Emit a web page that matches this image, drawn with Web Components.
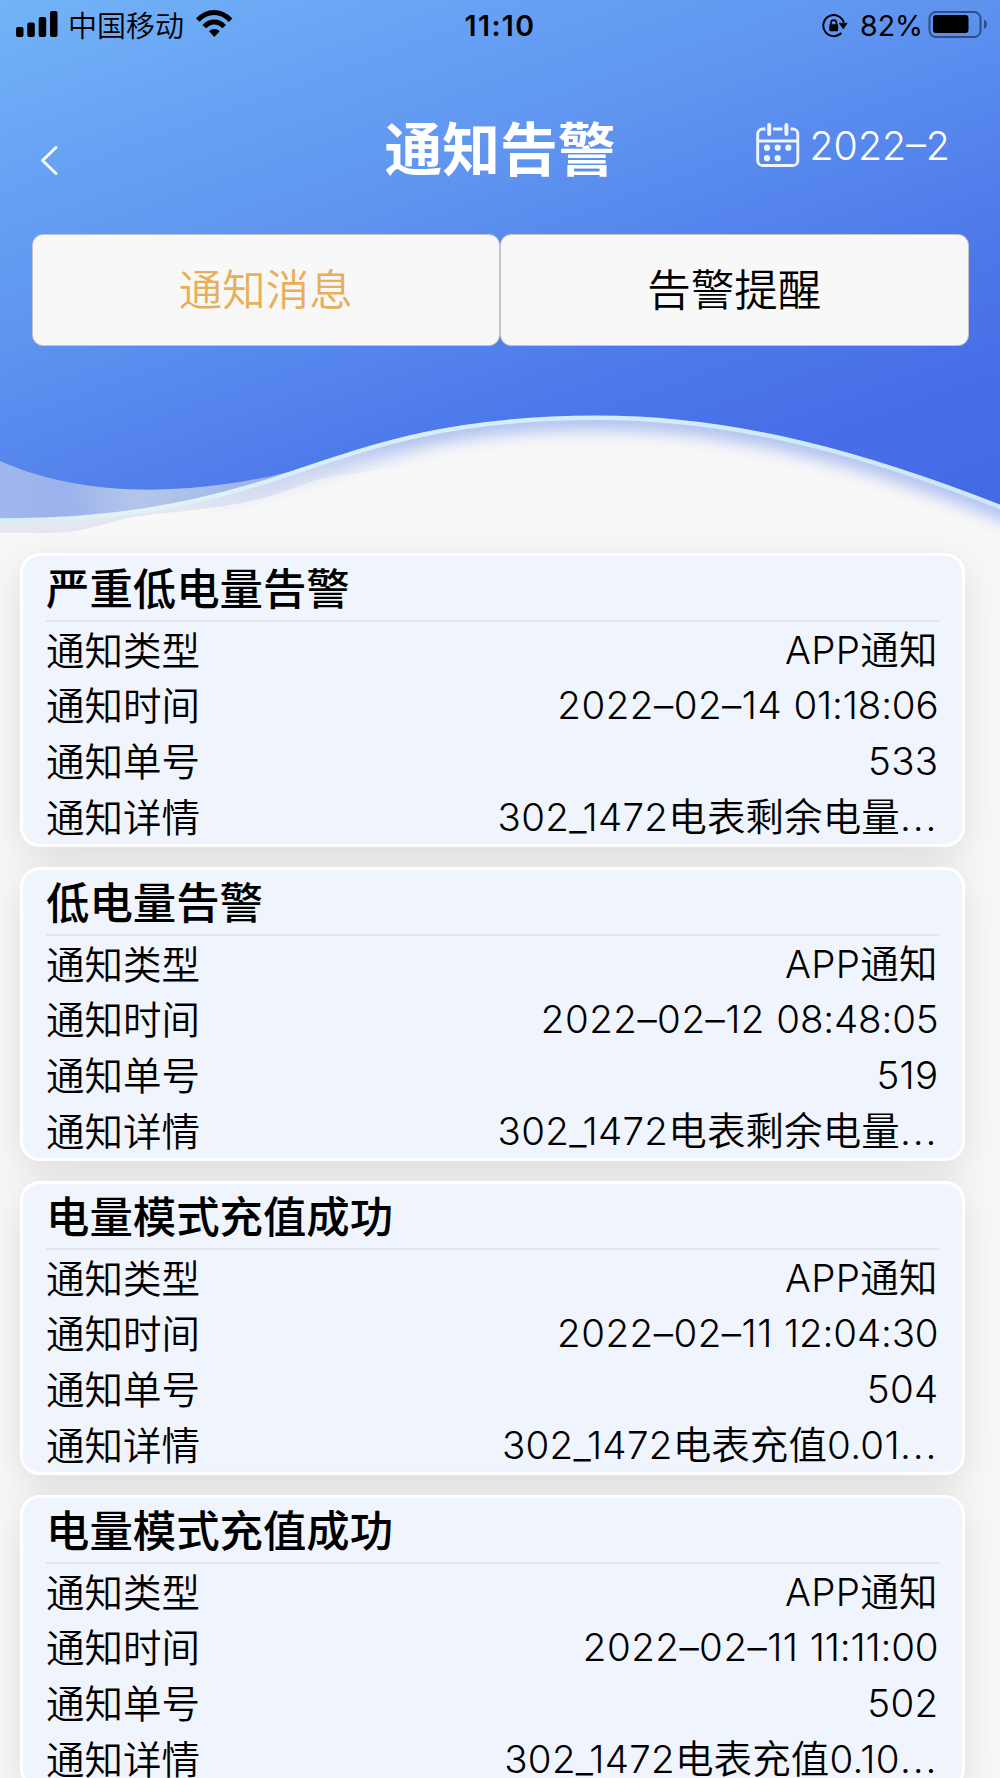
<!DOCTYPE html>
<html lang="zh-CN">
<head>
<meta charset="utf-8">
<title>通知告警</title>
<style>
html,body{margin:0;background:#f8f8f8}
body{width:1000px;height:1778px;overflow:hidden;font-family:Inter,"Noto Sans CJK SC",sans-serif;font-weight:300;color:#000}
</style>
</head>
<body>
<notice-app></notice-app>
<script>
const define = (name, html, setup) => {
  const t = document.createElement('template');
  t.innerHTML = html;
  customElements.define(name, class extends HTMLElement {
    connectedCallback() {
      if (this.shadowRoot) return;
      this.attachShadow({mode: 'open'}).append(t.content.cloneNode(true));
      if (setup) setup(this, this.shadowRoot);
    }
  });
};

define('status-bar', `
<style>
:host{display:flex;height:50px;align-items:flex-start;justify-content:space-between;box-sizing:border-box}
svg{display:block;flex:none}
div{display:flex;height:50px;line-height:50px}
.left,.right{flex:1 1 0}
.right{justify-content:flex-end}
.carrier{font-size:29px;margin-left:3px;font-weight:350;width:117px;white-space:nowrap;line-height:53px}
.time{font-size:28.5px;font-weight:600;letter-spacing:1.400px;line-height:51px}
.pct{font-size:28.5px;font-weight:400;letter-spacing:0;white-space:nowrap;line-height:51px}
</style>
<div class="left">
<svg width="65" height="50"><g fill="#000"><rect x="16" y="27" width="7.5" height="10" rx="2"/><rect x="27.3" y="22.5" width="7.5" height="14.5" rx="2"/><rect x="38.7" y="17" width="7.5" height="20" rx="2"/><rect x="50" y="11" width="7.5" height="26" rx="2"/></g></svg>
<span class="carrier">中国移动</span>
<svg width="60" height="50"><g fill="none" stroke="#000" stroke-width="5"><path d="M12.8 20.2C22 9.800 36 9.800 45.600 20.200"/><path d="M19.300 26.600C25 20.400 33.400 20.400 39.200 26.600"/></g><path d="M24 31.200C27 28.300 31.600 28.300 34.600 31.200L29.300 37Z"/></svg>
</div>
<span class="time">11:10</span>
<div class="right">
<svg width="38" height="50"><path d="M21.900 22.800A10.500 10.500 0 1 0 19.300 33" fill="none" stroke="#000" stroke-width="2"/><path d="M17.200 23.200H25.200L21.300 29Z" stroke="#000" stroke-width=".6" stroke-linejoin="round"/><rect x="7.300" y="24.300" width="8.800" height="7" rx="1"/><path d="M9 25V22.800A2.700 2.700 0 0 1 14.400 22.800V25" fill="none" stroke="#000" stroke-width="1.600"/></svg>
<span class="pct">82%</span>
<svg width="77" height="50"><rect x="6.500" y="12" width="51" height="25" rx="6.500" fill="none" stroke="#304d86" stroke-width="2"/><rect x="10" y="15" width="35.500" height="18" rx="3"/><path d="M61 19.500C65 21.500 65 27 61 29Z" fill="#304d86"/></svg>
</div>
`);

define('nav-header', `
<style>
:host{display:grid;grid-template-columns:1fr auto 1fr;height:184px;align-items:start}
svg{display:block;flex:none}
h1{margin:0;font-size:57.800px;font-weight:700;color:#fff;line-height:84px;padding-top:58px}
.date{display:flex;justify-content:flex-end;color:#fff;font-size:39.3px;line-height:50px;padding:71px 50px 0 0}
.date span{width:140.500px;margin-left:9.500px;white-space:nowrap;font-weight:330}
</style>
<svg width="100" height="184"><path d="M56 97.500L42.500 110.500L56 123.500" fill="none" stroke="#fff" stroke-width="2.800" stroke-linecap="round" stroke-linejoin="round"/></svg>
<h1><slot name="title"></slot></h1>
<div class="date"><svg width="44" height="50" viewBox="0 0 44 50"><g fill="none" stroke="#fff" stroke-width="2.900" opacity=".9"><path d="M9.500 8H6.500A4.800 4.800 0 0 0 1.700 12.800V39.700A4.800 4.800 0 0 0 6.500 44.500H37A4.800 4.800 0 0 0 41.800 39.700V12.800A4.800 4.800 0 0 0 37 8H34.500M17 8H26.500M1.700 20H41.800"/><path d="M13.200 4V13M30.400 4V13" stroke-width="4" stroke-linecap="round"/></g><g fill="#fff" opacity=".92"><circle cx="11" cy="26.700" r="3.100"/><circle cx="21.700" cy="26.700" r="3.100"/><circle cx="32.300" cy="26.700" r="3.100"/><circle cx="11" cy="37.200" r="3.100"/><circle cx="21.700" cy="37.200" r="3.100"/></g></svg><span><slot name="date"></slot></span></div>
`);

define('tab-item', `
<style>
:host{display:block;flex:1;box-sizing:border-box;height:112px;border:1.300px solid #c4c4c6;border-radius:11px;background:#f8f8f8;text-align:center;font-size:43.500px;line-height:111px;font-weight:350}
:host([active]){color:#e8ae5a}
</style><slot></slot>`);

define('tab-bar', `<style>:host{display:flex;padding:0 31.500px}</style><slot></slot>`);

define('wave-header', `
<style>
:host{display:grid;height:533px}
svg,.content{grid-area:1/1;display:block;min-width:0}
.line{z-index:1}
.content{z-index:2}
.bg{grid-area:1/1;background:linear-gradient(160deg,#72b4f7 0%,#68a3f4 18%,#6096f0 36%,#5687ed 52%,#4d79ea 66%,#476ee8 82%,#4468e4 100%);
clip-path:path("M0 0H1000V507C870 456 740 417.700 597 417.700C450 417.700 400 436 325 462C210 497 90 501 0 461Z")}
</style>
<svg width="1000" height="533" viewBox="0 0 1000 533">
<defs>
<linearGradient id="pale" gradientUnits="userSpaceOnUse" x1="0" y1="470" x2="330" y2="450"><stop offset="0" stop-color="#9fb7ee"/><stop offset=".2" stop-color="#9bb3ea"/><stop offset=".4" stop-color="#b3c5ea"/><stop offset=".55" stop-color="#aec1ea"/><stop offset="1" stop-color="#89a4ec"/></linearGradient>
<linearGradient id="fade" gradientUnits="userSpaceOnUse" x1="190" y1="0" x2="400" y2="0"><stop offset="0" stop-color="#000"/><stop offset="1" stop-color="#fff"/></linearGradient>
<linearGradient id="haze" gradientUnits="userSpaceOnUse" x1="0" y1="0" x2="430" y2="0"><stop offset="0" stop-color="#e5e8f1"/><stop offset=".65" stop-color="#e1e6f2"/><stop offset="1" stop-color="#e4e9f6" stop-opacity="0"/></linearGradient>
<mask id="m" maskUnits="userSpaceOnUse" x="0" y="0" width="1000" height="533"><rect width="1000" height="533" fill="url(#fade)"/></mask>
<filter id="blur" filterUnits="userSpaceOnUse" x="-40" y="300" width="1090" height="300"><feGaussianBlur stdDeviation="7.500"/></filter>
</defs>
<path d="M0 520C110 521 190 505 270 480L430 430V462C350 474 335 475 317 480C290 488 270 500 217 507C180 512 160 513 133 517C100 524 90 531 53 533H0Z" fill="url(#haze)"/>
<g mask="url(#m)"><path d="M180 519C230 505 240 502 270 493C360 463 440 430.500 597 430.500C740 430.500 870 469 1000 520L1060 544V380H100Z" fill="#b2c3f1" filter="url(#blur)"/></g>
<path d="M0 519C110 520 190 504 270 479L345 452L270 450H0Z" fill="url(#pale)"/>
</svg>
<div class="bg"></div>
<svg class="line" width="1000" height="533" viewBox="0 0 1000 533">
<linearGradient id="edge" gradientUnits="userSpaceOnUse" x1="0" y1="0" x2="1000" y2="0"><stop offset="0" stop-color="#d5eef5"/><stop offset=".15" stop-color="#e3f3f2"/><stop offset=".3" stop-color="#d9effa"/><stop offset="1" stop-color="#cbe8f8"/></linearGradient>
<path d="M-3 520.500C110 521.500 190 505.500 270 480.500C360 450.500 440 417.800 597 417.800C740 417.800 870 456 1003 508" fill="none" stroke="url(#edge)" stroke-width="4.400"/>
</svg>
<div class="content"><slot></slot></div>
`);

define('notice-row', `
<style>
:host{display:flex;justify-content:space-between;height:55.600px;font-size:38.500px;white-space:nowrap;font-weight:350}
.label{line-height:59.600px}
.value{line-height:57.600px;letter-spacing:.400px}
.digits{font-weight:340;letter-spacing:.300px}
.date{font-weight:340;letter-spacing:.480px}
.time{font-weight:340;letter-spacing:-.150px}
.han{letter-spacing:.100px}
.han:last-child{margin-right:1px}
.dots{letter-spacing:2px}
</style><span class="label"></span><span class="value"></span>`, (el, root) => {
  root.querySelector('.label').textContent = el.getAttribute('label');
  const value = root.querySelector('.value');
  // Dates, times, Chinese runs and the trailing dots each carry their own weight and tracking
  const kind = run => run === '...' ? 'dots'
    : /[\u4e00-\u9fff]/.test(run) ? 'han'
    : run.includes(':') ? 'time'
    : run.includes('–') ? 'date' : 'digits';
  for (const run of el.getAttribute('value').match(/\.{3}$|[\d–]+ |[\u4e00-\u9fff]+|(?:(?!\.{3}$)[^\u4e00-\u9fff])+/g)) {
    const s = document.createElement('span');
    s.textContent = run;
    s.className = kind(run);
    value.append(s);
  }
});

define('notice-card', `
<style>
:host{display:block;box-sizing:border-box;height:294px;border:3px solid #fff;border-radius:20px;background:#f0f4fc;padding:0 23.500px 0 23px;box-shadow:0 11px 40px rgba(0,0,0,.115)}
h2{margin:0;height:64.300px;line-height:67px;font-size:43.400px;font-weight:500;border-bottom:2px solid #e5e5e7}
</style><h2></h2><slot></slot>`, (el, root) => {
  root.querySelector('h2').textContent = el.getAttribute('heading');
});

define('notice-list', `<style>:host{display:flex;flex-direction:column;gap:20px;padding:19.500px 35px 0 20px}</style><slot></slot>`);

define('notice-app', `
<style>:host{display:block;width:1000px;height:1778px;overflow:hidden;background:#f8f8f8}</style>
<wave-header>
<status-bar></status-bar>
<nav-header><span slot="title">通知告警</span><span slot="date">2022–2</span></nav-header>
<tab-bar><tab-item active>通知消息</tab-item><tab-item>告警提醒</tab-item></tab-bar>
</wave-header>
<notice-list>
<notice-card heading="严重低电量告警">
<notice-row label="通知类型" value="APP通知"></notice-row><notice-row label="通知时间" value="2022–02–14 01:18:06"></notice-row><notice-row label="通知单号" value="533"></notice-row><notice-row label="通知详情" value="302_1472电表剩余电量..."></notice-row>
</notice-card>
<notice-card heading="低电量告警">
<notice-row label="通知类型" value="APP通知"></notice-row><notice-row label="通知时间" value="2022–02–12 08:48:05"></notice-row><notice-row label="通知单号" value="519"></notice-row><notice-row label="通知详情" value="302_1472电表剩余电量..."></notice-row>
</notice-card>
<notice-card heading="电量模式充值成功">
<notice-row label="通知类型" value="APP通知"></notice-row><notice-row label="通知时间" value="2022–02–11 12:04:30"></notice-row><notice-row label="通知单号" value="504"></notice-row><notice-row label="通知详情" value="302_1472电表充值0.01..."></notice-row>
</notice-card>
<notice-card heading="电量模式充值成功">
<notice-row label="通知类型" value="APP通知"></notice-row><notice-row label="通知时间" value="2022–02–11 11:11:00"></notice-row><notice-row label="通知单号" value="502"></notice-row><notice-row label="通知详情" value="302_1472电表充值0.10..."></notice-row>
</notice-card>
</notice-list>
`);
</script>
</body>
</html>
